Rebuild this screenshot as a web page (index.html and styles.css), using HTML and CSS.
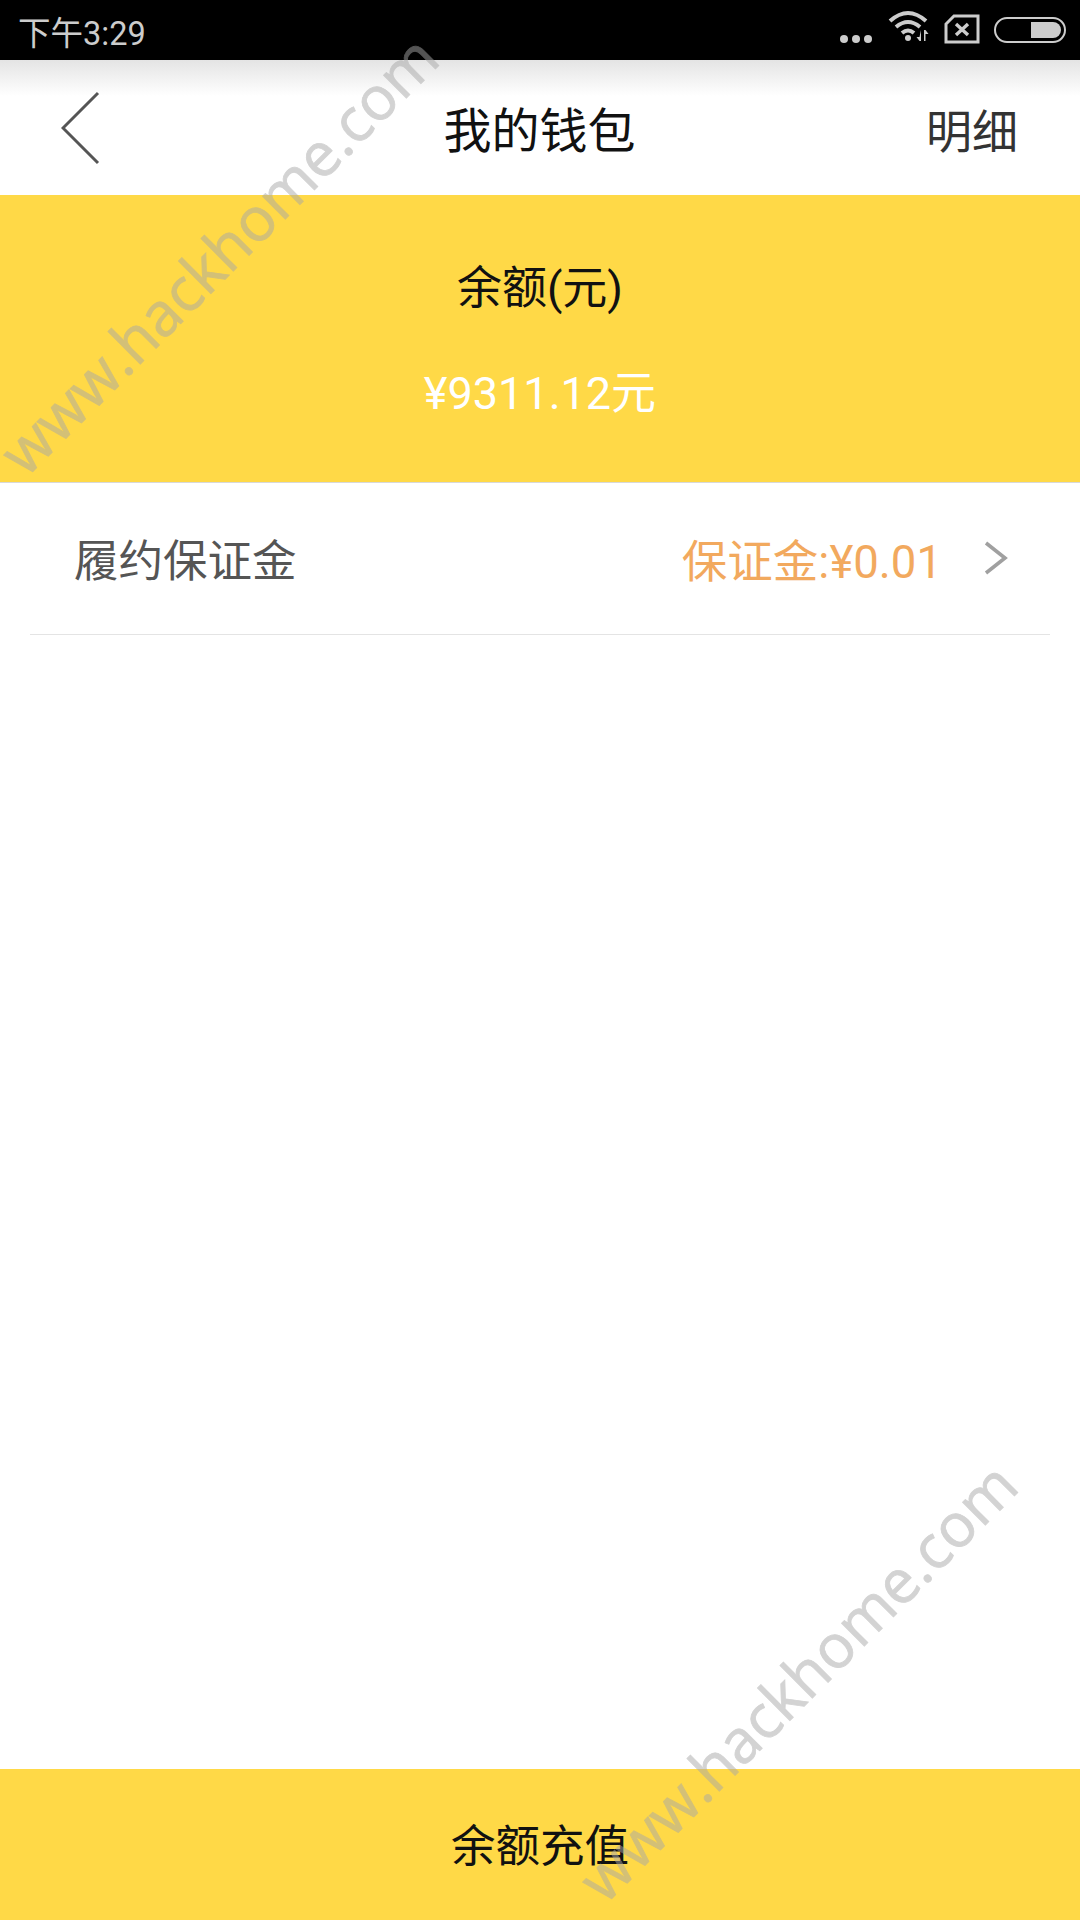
FILE: index.html
```html
<!DOCTYPE html>
<html lang="zh-CN">
<head>
  <meta charset="UTF-8">
  <meta name="viewport" content="width=device-width, initial-scale=1.0">
  <title>我的钱包</title>
  <link rel="stylesheet" href="styles.css">
</head>
<body>
  <div class="page">
    <div class="status-bar">
      <span class="status-time">下午3:29</span>
      <div class="status-icons">
        <div class="dots"><i></i><i></i><i></i></div>
        <svg class="wifi" width="42" height="34" viewBox="0 0 42 34">
          <path d="M2 12 Q20 -4 38 12" fill="none" stroke="#ccc" stroke-width="4"/>
          <path d="M8 18 Q20 8 32 18" fill="none" stroke="#ccc" stroke-width="4"/>
          <path d="M14 24 Q20 19 26 24" fill="none" stroke="#ccc" stroke-width="4"/>
          <circle cx="20" cy="29" r="3" fill="#ccc"/>
          <path d="M33 21v11h-1.500l-3 -4h3zM36 32V21h1.500l3 4h-3v7z" fill="#ccc"/>
        </svg>
        <svg class="sim" width="36" height="30" viewBox="0 0 36 30">
          <path d="M10 2H34V28H2V10Z" fill="none" stroke="#ccc" stroke-width="3"/>
          <path d="M12 10L24 21M24 10L12 21" stroke="#ccc" stroke-width="3.400"/>
        </svg>
        <div class="battery"><div class="battery-level"></div></div>
      </div>
    </div>

    <header class="app-bar">
      <svg class="back" width="40" height="74" viewBox="0 0 40 74">
        <path d="M37 2L2 37L37 72" fill="none" stroke="#555" stroke-width="3"/>
      </svg>
      <h1 class="title">我的钱包</h1>
      <span class="detail-link">明细</span>
    </header>

    <section class="balance">
      <div class="balance-label">余额(元)</div>
      <div class="balance-value">¥9311.12元</div>
    </section>

    <div class="list-row">
      <span class="row-label">履约保证金</span>
      <span class="row-value">保证金:¥0.01</span>
      <svg class="chevron" width="24" height="36" viewBox="0 0 24 36">
        <path d="M2 3L21 18L2 33" fill="none" stroke="#a0a0a0" stroke-width="3.600"/>
      </svg>
    </div>

    <div class="spacer"></div>

    <button class="recharge" type="button"><span class="recharge-text">余额充值</span></button>

    <div class="watermark watermark-top">www.hackhome.com</div>
    <div class="watermark watermark-bottom">www.hackhome.com</div>
  </div>
</body>
</html>
```

FILE: styles.css
```css
* {
  box-sizing: border-box;
}

body {
  margin: 0;
  background-color: #fff;
  font-family: "Roboto", "Noto Sans CJK SC", sans-serif;
}

.page {
  position: relative;
  display: flex;
  flex-direction: column;
  width: 1080px;
  height: 1920px;
  overflow: hidden;
}

.status-bar {
  display: flex;
  justify-content: space-between;
  align-items: center;
  height: 60px;
  padding: 0 14px 0 18px;
  background-color: #000;
}

.status-time {
  color: #ccc;
  font-size: 32.500px;
}

.status-icons {
  display: flex;
  align-items: center;
}

.dots {
  display: flex;
  gap: 4px;
  margin: 18px 16px 0 0;
}

.dots i {
  width: 8px;
  height: 8px;
  border-radius: 50%;
  background-color: #ccc;
}

.wifi {
  margin: 0 14px 8px 0;
}

.sim {
  margin: 0 14px 2px 0;
}

.battery {
  display: flex;
  justify-content: flex-end;
  width: 72px;
  height: 26px;
  padding: 3px;
  border: 2px solid #ccc;
  border-radius: 13px;
}

.battery-level {
  width: 30px;
  border-radius: 0 9px 9px 0;
  background-color: #ccc;
}

.app-bar {
  display: grid;
  grid-template-columns: 1fr auto 1fr;
  align-items: center;
  height: 135px;
  padding: 0 62px 0 61px;
  background: linear-gradient(#e4e4e4, #fff 36px);
}

.title {
  margin: 0 0 2px;
  color: #111;
  font-size: 48px;
  font-weight: 400;
}

.detail-link {
  justify-self: end;
  color: #333;
  font-size: 46px;
}

.balance {
  display: flex;
  flex-direction: column;
  align-items: center;
  height: 288px;
  padding-top: 67px;
  border-bottom: 1px solid #d8d8d8;
  background-color: #ffd947;
}

.balance-label {
  color: #111;
  font-size: 45px;
  line-height: 54px;
}

.balance-value {
  margin-top: 51px;
  color: #fff;
  font-size: 45px;
  line-height: 54px;
}

.list-row {
  display: flex;
  align-items: center;
  height: 152px;
  margin: 0 30px;
  padding: 0 42px 2px 44px;
  border-bottom: 1px solid #e4e4e4;
}

.row-label {
  flex: 1;
  color: #555;
  font-size: 44.500px;
}

.row-value {
  margin-right: 42px;
  color: #f2a95e;
  font-size: 45.500px;
}

.spacer {
  flex: 1;
}

.recharge {
  height: 151px;
  padding: 0 0 4px;
  border: none;
  background-color: #ffd947;
  color: #111;
  font-family: inherit;
  font-size: 44.500px;
}

/* site stamp over the screenshot, it also shows on the black status bar */
.watermark {
  position: absolute;
  color: #a8a8a8;
  opacity: 0.5;
  font-family: "Open Sans", sans-serif;
  font-size: 60.500px;
  line-height: 70px;
  white-space: nowrap;
  -webkit-text-stroke: 0.8px #a8a8a8;
  transform: translate(-50%, -50%) rotate(-45deg);
}

.watermark-top {
  left: 218px;
  top: 254px;
}

.watermark-bottom {
  left: 797px;
  top: 1681px;
}
```
